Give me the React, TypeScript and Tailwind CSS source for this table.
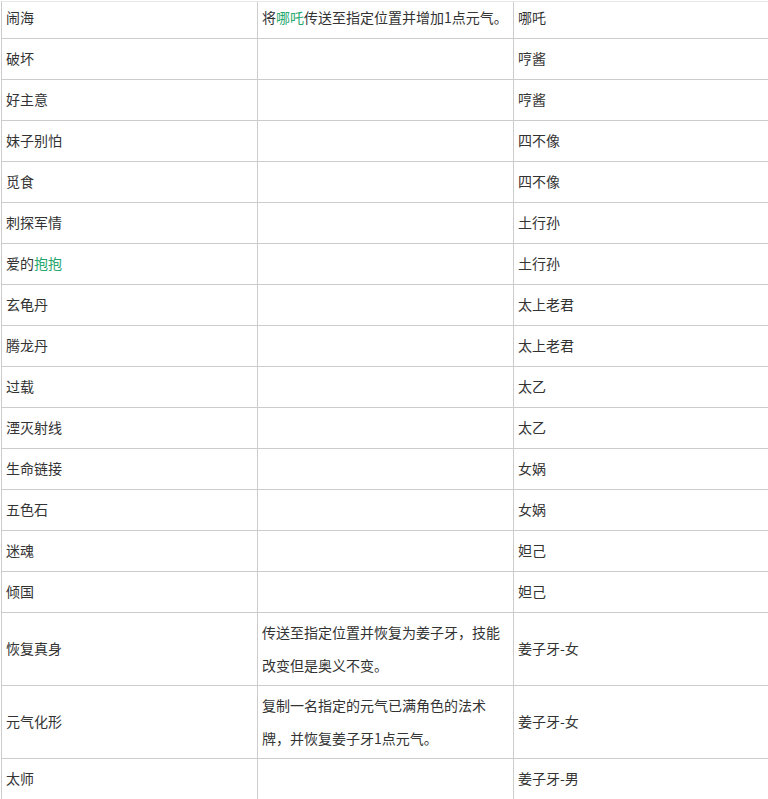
import React from "react";

type Row = { a: React.ReactNode; b?: React.ReactNode; c: string; tall?: boolean };

const G = ({ children }: { children: React.ReactNode }) => (
  <span className="text-[#27a86e]">{children}</span>
);

const rows: Row[] = [
  { a: "闹海", b: (<>将<G>哪吒</G>传送至指定位置并增加1点元气。</>), c: "哪吒" },
  { a: "破坏", c: "哼酱" },
  { a: "好主意", c: "哼酱" },
  { a: "妹子别怕", c: "四不像" },
  { a: "觅食", c: "四不像" },
  { a: "刺探军情", c: "土行孙" },
  { a: (<>爱的<G>抱抱</G></>), c: "土行孙" },
  { a: "玄龟丹", c: "太上老君" },
  { a: "腾龙丹", c: "太上老君" },
  { a: "过载", c: "太乙" },
  { a: "湮灭射线", c: "太乙" },
  { a: "生命链接", c: "女娲" },
  { a: "五色石", c: "女娲" },
  { a: "迷魂", c: "妲己" },
  { a: "倾国", c: "妲己" },
  { a: "恢复真身", b: "传送至指定位置并恢复为姜子牙，技能改变但是奥义不变。", c: "姜子牙-女", tall: true },
  { a: "元气化形", b: "复制一名指定的元气已满角色的法术牌，并恢复姜子牙1点元气。", c: "姜子牙-女", tall: true },
  { a: "太师", c: "姜子牙-男" },
];

export default function App() {
  return (
    <div
      className="w-[768px] h-[799px] overflow-hidden bg-white text-[14px] text-[#333]"
      style={{ fontFamily: '"Noto Sans CJK SC", "Noto Sans", sans-serif' }}
    >
      <div className="ml-[1px] mt-[1px] w-[769px] border-l border-t border-l-[#cccccc] border-t-[#e8e8e8]">
        {rows.map((r, i) => {
          const h = i === 0 ? "h-[36px] pb-[5px]" : r.tall ? "h-[72px] pb-[1px]" : "h-[40px] pb-[1px]";
          return (
            <div key={i} className="flex border-b border-[#cccccc]">
              <div className={`w-[256px] shrink-0 border-r border-[#cccccc] px-[4px] flex items-center ${h}`}>
                <span>{r.a}</span>
              </div>
              <div className={`w-[256px] shrink-0 border-r border-[#cccccc] px-[4px] flex items-center leading-[33px] ${h}`}>
                <span>{r.b}</span>
              </div>
              <div className={`w-[256px] shrink-0 border-r border-[#cccccc] px-[4px] flex items-center ${h}`}>
                <span>{r.c}</span>
              </div>
            </div>
          );
        })}
      </div>
    </div>
  );
}
